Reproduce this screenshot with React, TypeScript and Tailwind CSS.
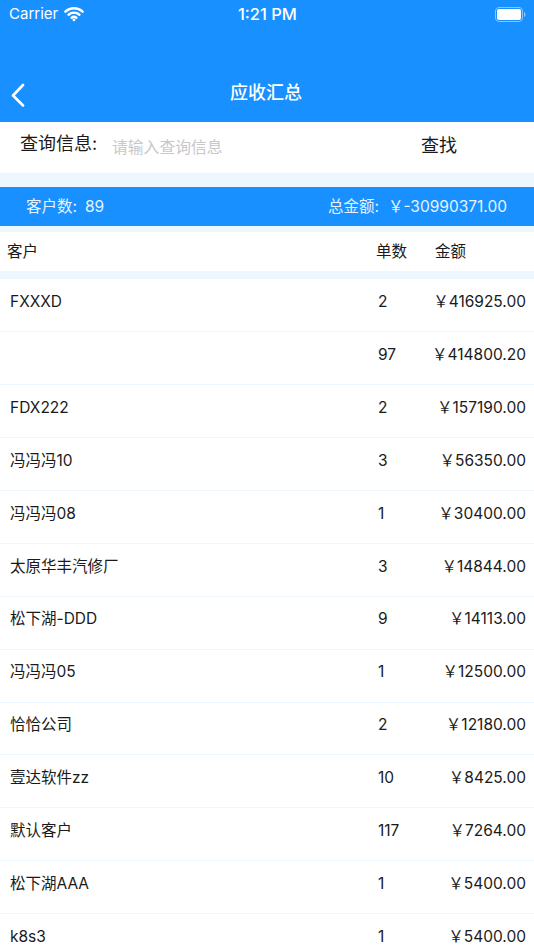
import React from "react";

const YEN = "\uFFE5";

const rows: [string, string, string][] = [
  ["FXXXD", "2", "416925.00"],
  ["", "97", "414800.20"],
  ["FDX222", "2", "157190.00"],
  ["冯冯冯10", "3", "56350.00"],
  ["冯冯冯08", "1", "30400.00"],
  ["太原华丰汽修厂", "3", "14844.00"],
  ["松下湖-DDD", "9", "14113.00"],
  ["冯冯冯05", "1", "12500.00"],
  ["恰恰公司", "2", "12180.00"],
  ["壹达软件zz", "10", "8425.00"],
  ["默认客户", "117", "7264.00"],
  ["松下湖AAA", "1", "5400.00"],
  ["k8s3", "1", "5400.00"],
];

export default function App() {
  return (
    <div className="w-[534px] h-[950px] overflow-hidden bg-white text-[#1a1a1a] font-['Inter','Noto_Sans_CJK_SC',sans-serif]">
      <header className="h-[122px] bg-[#1890ff] text-white flex flex-col">
        <div className="h-[28px] flex items-center justify-between pl-[9px] pr-[8px] relative text-[15px]">
          <div className="flex items-center gap-[6px]">
            <span>Carrier</span>
            <svg width="20" height="16" viewBox="0 0 21 16" fill="none" stroke="white" strokeLinecap="round">
              <path d="M1.500 5.600C6.500 .8 14.500 .8 19.500 5.600" strokeWidth="2.600" />
              <path d="M4.800 8.800C8 5.800 13 5.800 16.200 8.800" strokeWidth="2.600" />
              <path d="M8 12C9.400 10.800 11.600 10.800 13 12" strokeWidth="2.600" />
              <circle cx="10.500" cy="14.200" r="1.500" fill="white" stroke="none" />
            </svg>
          </div>
          <span className="absolute left-[238px] text-[16.500px] font-medium">1:21 PM</span>
          <svg width="31" height="15" viewBox="0 0 31 15" fill="none">
            <rect x="0.500" y="0.500" width="27" height="14" rx="3.500" stroke="#8cc6ff" />
            <rect x="2" y="2" width="24" height="11" rx="2" fill="white" />
            <path d="M29 5v5c.9-.3 1.500-1.400 1.500-2.500S29.900 5.300 29 5z" fill="#8cc6ff" />
          </svg>
        </div>
        <div className="flex-1 relative flex items-center justify-center pt-[35px]">
          <svg className="absolute left-[11px] top-[55px]" width="14" height="24" viewBox="0 0 14 24" fill="none" stroke="white" strokeWidth="2.600" strokeLinecap="round" strokeLinejoin="round">
            <path d="M12 2 2 12.500 12 22.500" />
          </svg>
          <span className="text-[18px] font-medium -ml-[2px]">应收汇总</span>
        </div>
      </header>

      <section className="h-[51px] flex items-center bg-white pb-[4px]">
        <span className="ml-[20px] w-[92px] text-[18px] leading-none mb-[3px]">查询信息:</span>
        <span className="text-[15.800px] text-[#c8c8c8] leading-none mt-[4px]">请输入查询信息</span>
        <span className="ml-auto mr-[77px] text-[18px] leading-none">查找</span>
      </section>

      <div className="h-[14px] bg-[#eff7fe]" />

      <section className="h-[39px] bg-[#1890ff] text-[#e6f3ff] flex items-center justify-between pl-[26px] pr-[27px] text-[15.500px]">
        <span>客户数<span className="mr-[8px]">:</span>89</span>
        <span>总金额<span className="mr-[9px]">:</span>{YEN}-30990371.00</span>
      </section>

      <div className="h-[6px] bg-[#eff7fe]" />

      <section className="h-[39px] flex items-center text-[15.500px] bg-white">
        <span className="ml-[7px] w-[369px]">客户</span>
        <span className="w-[59px]">单数</span>
        <span>金额</span>
      </section>

      <div className="h-[8px] bg-[#eff7fe]" />

      <div>
        {rows.map(([name, count, amount], i) => (
          <div key={i} className="h-[52.950px] flex items-center text-[15.500px] border-b border-[#eff7fe] box-border pb-[7px]">
            <span className="ml-[10px] w-[368px] shrink-0">{name}</span>
            <span className="w-[40px] shrink-0">{count}</span>
            <span className="flex-1 text-right mr-[8px]">{YEN}{amount}</span>
          </div>
        ))}
      </div>
    </div>
  );
}
